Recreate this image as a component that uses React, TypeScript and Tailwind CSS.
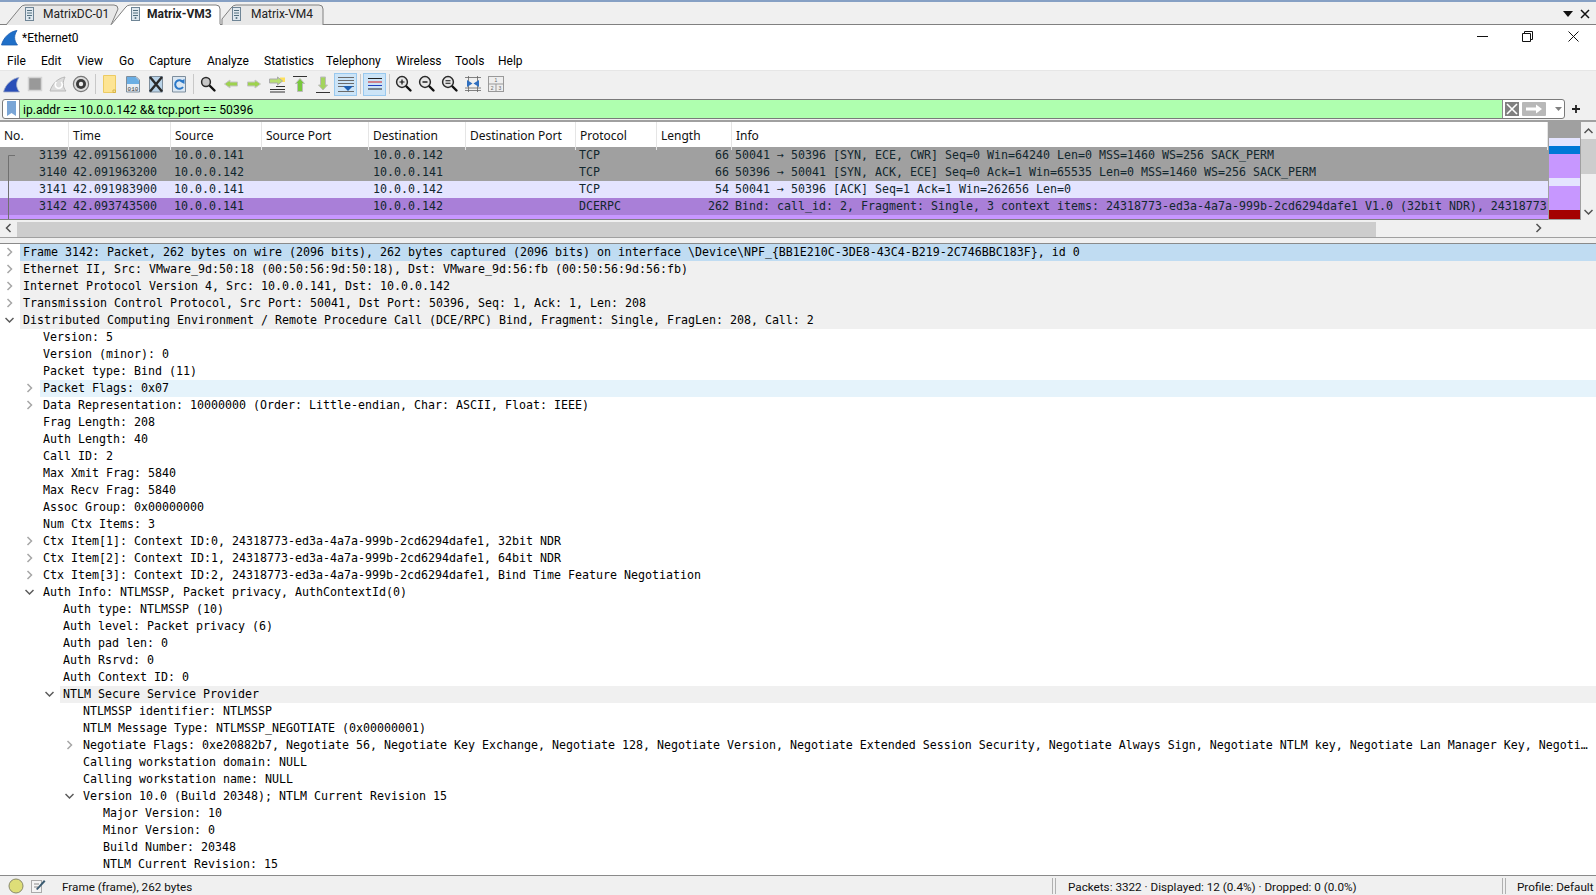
import React from "react"

const MONO = "font-['DejaVu_Sans_Mono','Liberation_Mono',monospace] text-[11.63px]"

const packets = [
    { no: "3139", time: "42.091561000", src: "10.0.0.141", dst: "10.0.0.142", proto: "TCP", len: "66", info: "50041 → 50396 [SYN, ECE, CWR] Seq=0 Win=64240 Len=0 MSS=1460 WS=256 SACK_PERM", bg: "bg-[#a0a0a0]" },
    { no: "3140", time: "42.091963200", src: "10.0.0.142", dst: "10.0.0.141", proto: "TCP", len: "66", info: "50396 → 50041 [SYN, ACK, ECE] Seq=0 Ack=1 Win=65535 Len=0 MSS=1460 WS=256 SACK_PERM", bg: "bg-[#a0a0a0]" },
    { no: "3141", time: "42.091983900", src: "10.0.0.141", dst: "10.0.0.142", proto: "TCP", len: "54", info: "50041 → 50396 [ACK] Seq=1 Ack=1 Win=262656 Len=0", bg: "bg-[#e4e4ff]" },
    { no: "3142", time: "42.093743500", src: "10.0.0.141", dst: "10.0.0.142", proto: "DCERPC", len: "262", info: "Bind: call_id: 2, Fragment: Single, 3 context items: 24318773-ed3a-4a7a-999b-2cd6294dafe1 V1.0 (32bit NDR), 24318773", bg: "bg-[#a97fd8]" },
]

const menus = [
    { label: "File", w: "w-[34px]" },
    { label: "Edit", w: "w-[36px]" },
    { label: "View", w: "w-[42px]" },
    { label: "Go", w: "w-[30px]" },
    { label: "Capture", w: "w-[58px]" },
    { label: "Analyze", w: "w-[57px]" },
    { label: "Statistics", w: "w-[62px]" },
    { label: "Telephony", w: "w-[70px]" },
    { label: "Wireless", w: "w-[59px]" },
    { label: "Tools", w: "w-[43px]" },
    { label: "Help", w: "w-[40px]" },
]

type TreeRow = { text: string; level: number; arrow?: "right" | "down"; bg?: string }

const tree: TreeRow[] = [
    { level: 0, arrow: "right", bg: "bg-[#c0dcf2]", text: "Frame 3142: Packet, 262 bytes on wire (2096 bits), 262 bytes captured (2096 bits) on interface \\Device\\NPF_{BB1E210C-3DE8-43C4-B219-2C746BBC183F}, id 0" },
    { level: 0, arrow: "right", bg: "bg-[#f0f0f0]", text: "Ethernet II, Src: VMware_9d:50:18 (00:50:56:9d:50:18), Dst: VMware_9d:56:fb (00:50:56:9d:56:fb)" },
    { level: 0, arrow: "right", bg: "bg-[#f0f0f0]", text: "Internet Protocol Version 4, Src: 10.0.0.141, Dst: 10.0.0.142" },
    { level: 0, arrow: "right", bg: "bg-[#f0f0f0]", text: "Transmission Control Protocol, Src Port: 50041, Dst Port: 50396, Seq: 1, Ack: 1, Len: 208" },
    { level: 0, arrow: "down", bg: "bg-[#f0f0f0]", text: "Distributed Computing Environment / Remote Procedure Call (DCE/RPC) Bind, Fragment: Single, FragLen: 208, Call: 2" },
    { level: 1, text: "Version: 5" },
    { level: 1, text: "Version (minor): 0" },
    { level: 1, text: "Packet type: Bind (11)" },
    { level: 1, arrow: "right", bg: "bg-[#e5f3fb]", text: "Packet Flags: 0x07" },
    { level: 1, arrow: "right", text: "Data Representation: 10000000 (Order: Little-endian, Char: ASCII, Float: IEEE)" },
    { level: 1, text: "Frag Length: 208" },
    { level: 1, text: "Auth Length: 40" },
    { level: 1, text: "Call ID: 2" },
    { level: 1, text: "Max Xmit Frag: 5840" },
    { level: 1, text: "Max Recv Frag: 5840" },
    { level: 1, text: "Assoc Group: 0x00000000" },
    { level: 1, text: "Num Ctx Items: 3" },
    { level: 1, arrow: "right", text: "Ctx Item[1]: Context ID:0, 24318773-ed3a-4a7a-999b-2cd6294dafe1, 32bit NDR" },
    { level: 1, arrow: "right", text: "Ctx Item[2]: Context ID:1, 24318773-ed3a-4a7a-999b-2cd6294dafe1, 64bit NDR" },
    { level: 1, arrow: "right", text: "Ctx Item[3]: Context ID:2, 24318773-ed3a-4a7a-999b-2cd6294dafe1, Bind Time Feature Negotiation" },
    { level: 1, arrow: "down", text: "Auth Info: NTLMSSP, Packet privacy, AuthContextId(0)" },
    { level: 2, text: "Auth type: NTLMSSP (10)" },
    { level: 2, text: "Auth level: Packet privacy (6)" },
    { level: 2, text: "Auth pad len: 0" },
    { level: 2, text: "Auth Rsrvd: 0" },
    { level: 2, text: "Auth Context ID: 0" },
    { level: 2, arrow: "down", bg: "bg-[#f0f0f0]", text: "NTLM Secure Service Provider" },
    { level: 3, text: "NTLMSSP identifier: NTLMSSP" },
    { level: 3, text: "NTLM Message Type: NTLMSSP_NEGOTIATE (0x00000001)" },
    { level: 3, arrow: "right", text: "Negotiate Flags: 0xe20882b7, Negotiate 56, Negotiate Key Exchange, Negotiate 128, Negotiate Version, Negotiate Extended Session Security, Negotiate Always Sign, Negotiate NTLM key, Negotiate Lan Manager Key, Negoti…" },
    { level: 3, text: "Calling workstation domain: NULL" },
    { level: 3, text: "Calling workstation name: NULL" },
    { level: 3, arrow: "down", text: "Version 10.0 (Build 20348); NTLM Current Revision 15" },
    { level: 4, text: "Major Version: 10" },
    { level: 4, text: "Minor Version: 0" },
    { level: 4, text: "Build Number: 20348" },
    { level: 4, text: "NTLM Current Revision: 15" },
]

const indent = ["ml-[20px]", "ml-[40px]", "ml-[60px]", "ml-[80px]", "ml-[100px]"]
const arrowWidth = ["w-[20px]", "w-[40px]", "w-[60px]", "w-[80px]", "w-[100px]"]

const Chevron = ({ dir, color = "#a6a6a6" }: { dir: "right" | "down" | "left" | "up"; color?: string }) => {
    const d = { right: "M2.5 1 L6.5 5 L2.5 9", left: "M6.5 1 L2.5 5 L6.5 9", down: "M0.5 3 L4.5 7 L8.5 3", up: "M0.5 7 L4.5 3 L8.5 7" }[dir]
    return (
        <svg width="9" height="10" viewBox="0 0 9 10" fill="none">
            <path d={d} stroke={color} strokeWidth="1.5" />
        </svg>
    )
}

const Shark = ({ light }: { light?: boolean }) => (
    <svg width="17" height="17" viewBox="0 0 17 17">
        <path d="M0.5 16 C2.5 8 9 2.5 16 1.5 C13 6 12.5 11 16.5 16 Z" fill={light ? "#1f6fc8" : "#2a4fb8"} stroke={light ? "#1a5db0" : "#a4aec8"} strokeWidth="0.8" />
    </svg>
)

const DocTab = () => (
    <svg width="9" height="14" viewBox="0 0 9 14" className="shrink-0">
        <rect x="0.5" y="0.5" width="8" height="13" fill="#dfe8ef" stroke="#6f8596" />
        <path d="M2 3.5H7M2 6H7M2 8.5H7" stroke="#54707f" />
        <circle cx="4.5" cy="11" r="1" fill="#54707f" />
    </svg>
)

const Icon = ({ children }: { children: React.ReactNode }) => (
    <svg width="20" height="20" viewBox="0 0 20 20">{children}</svg>
)

const Magnifier = ({ mark }: { mark?: "plus" | "minus" | "eq" }) => (
    <Icon>
        <path d="M12 12 L16.5 16.5" stroke="#111" strokeWidth="2.4" strokeLinecap="round" />
        <circle cx="8" cy="8" r={mark ? 5.4 : 4.4} fill={mark ? "#e8e8e8" : "#c8c8c8"} stroke="#2a2a2a" strokeWidth="1.5" />
        {mark === "plus" && <path d="M5.5 8H10.5M8 5.5V10.5" stroke="#111" strokeWidth="1.2" />}
        {mark === "minus" && <path d="M5.5 8H10.5" stroke="#111" strokeWidth="1.4" />}
        {mark === "eq" && <path d="M5.5 6.8H10.5M5.5 9.2H10.5" stroke="#111" strokeWidth="1.1" />}
    </Icon>
)

const ArrowH = ({ left }: { left?: boolean }) => (
    <Icon>
        <path
            d={left ? "M3.5 10 L9 6 V8 H16.5 V12 H9 V14 Z" : "M16.5 10 L11 6 V8 H3.5 V12 H11 V14 Z"}
            fill="#9ed24f"
            stroke="#c4c4c4"
        />
    </Icon>
)

const Sep = () => (
    <div className="w-[6px] h-[20px] flex justify-center shrink-0">
        <div className="w-px h-full bg-[#c8c8c8]" />
    </div>
)

const Btn = ({ children, on }: { children: React.ReactNode; on?: boolean }) => (
    <div className={`w-[23px] h-[23px] flex items-center justify-center shrink-0 ${on ? "bg-[#cce4f7] border border-[#99c9ef]" : ""}`}>
        {children}
    </div>
)

const Toolbar = () => (
    <div className="h-[27px] flex items-center bg-[#f0f0f0] border-t border-[#e6e6e6]">
        <Btn><Shark /></Btn>
        <Btn>
            <Icon><rect x="3.5" y="3.5" width="13" height="13" fill="#999" stroke="#d4d4d4" strokeWidth="1.5" /></Icon>
        </Btn>
        <Btn>
            <Icon>
                <path d="M2 17 C4 10 10 4 17 3 C14.5 8 14.5 13 18 17 Z" fill="#dcdcdc" stroke="#b8b8b8" />
                <path d="M13 8 A3.5 3.5 0 1 1 8.5 8" fill="none" stroke="#fff" strokeWidth="1.6" />
            </Icon>
        </Btn>
        <Btn>
            <Icon>
                <circle cx="10" cy="10" r="7.6" fill="#ddd" stroke="#777" strokeWidth="1.2" />
                <circle cx="10" cy="10" r="5" fill="#3a3a3a" />
                <circle cx="10" cy="10" r="2.2" fill="#eee" />
            </Icon>
        </Btn>
        <Sep />
        <Btn>
            <Icon>
                <path d="M3.5 1.5 H15.5 V18.5 H3.5 Z" fill="#fde493" stroke="#eccb63" />
                <path d="M13 16 H15.5 V18.5 H13 Z" fill="none" stroke="#d8b548" />
            </Icon>
        </Btn>
        <Btn>
            <Icon>
                <path d="M3.5 2.5 H13 L16.5 6 V18 H3.5 Z" fill="#e8eef4" stroke="#7d8d9c" />
                <path d="M4 3 H12.5 L16 6.5 V10 H4 Z" fill="#6aaee4" />
                <text x="10" y="16.5" textAnchor="middle" fontSize="6" fontFamily="Liberation Mono" fill="#333">010</text>
            </Icon>
        </Btn>
        <Btn>
            <Icon>
                <path d="M3.5 2.5 H16.5 V18 H3.5 Z" fill="#b9d3e8" stroke="#7d8d9c" />
                <path d="M4 3 L16 17.5 M16 3 L4 17.5" stroke="#2a2a2a" strokeWidth="2.4" />
            </Icon>
        </Btn>
        <Btn>
            <Icon>
                <path d="M3.5 2.5 H16.5 V18 H3.5 Z" fill="#dbe7f2" stroke="#7d8d9c" />
                <path d="M14 8 A4.3 4.3 0 1 0 14 13" fill="none" stroke="#2a78c8" strokeWidth="2" />
                <path d="M11 7.5 L15.5 5 V10 Z" fill="#2a78c8" />
            </Icon>
        </Btn>
        <Sep />
        <Btn><Magnifier /></Btn>
        <Btn><ArrowH left /></Btn>
        <Btn><ArrowH /></Btn>
        <Btn>
            <Icon>
                <path d="M3 15.5H18M3 18H18M9 12.5H18" stroke="#333" />
                <path d="M13 3.5 H18 V8 H13 Z" fill="#fde05c" />
                <path d="M15.5 7 L10.5 3 V5 H2.5 V9 H10.5 V11 Z" fill="#b8e070" stroke="#aaa" />
            </Icon>
        </Btn>
        <Btn>
            <Icon>
                <path d="M3 2.5H17" stroke="#333" />
                <path d="M10 4.5 L14.5 9.5 H12.5 V17.5 H7.5 V9.5 H5.5 Z" fill="#79c93e" stroke="#bbb" />
            </Icon>
        </Btn>
        <Btn>
            <Icon>
                <path d="M3 18.5H17" stroke="#333" />
                <path d="M10 16 L14.5 11 H12.5 V3 H7.5 V11 H5.5 Z" fill="#a3d45c" stroke="#bbb" />
            </Icon>
        </Btn>
        <Btn on>
            <Icon>
                <path d="M2 3.5H18M2 6.5H18M2 9.5H18M2 12.5H18M2 17.5H18" stroke="#6a6a6a" />
                <path d="M7 12 H17 L12 17 Z" fill="#1f5fb0" />
            </Icon>
        </Btn>
        <Sep />
        <Btn on>
            <Icon>
                <path d="M3 4.5H17" stroke="#222" />
                <path d="M3 8H17" stroke="#d02020" />
                <path d="M3 11.5H17" stroke="#2040c0" />
                <path d="M3 15H17" stroke="#222" />
            </Icon>
        </Btn>
        <Sep />
        <Btn><Magnifier mark="plus" /></Btn>
        <Btn><Magnifier mark="minus" /></Btn>
        <Btn><Magnifier mark="eq" /></Btn>
        <Btn>
            <Icon>
                <path d="M2 3.5H18M2 16.5H18M2 14H18M5.5 2V18M14.5 2V18" stroke="#666" strokeWidth="0.8" />
                <path d="M4 6 L9.5 9.5 L4 13 Z M16 6 L10.5 9.5 L16 13 Z" fill="#2f6fc0" />
            </Icon>
        </Btn>
        <Btn>
            <Icon>
                <rect x="2.5" y="2.5" width="15" height="15" fill="#eee" stroke="#999" />
                <path d="M2.5 10H17.5M10 10V17.5" stroke="#999" />
                <text x="10" y="8" textAnchor="middle" fontSize="5" fontFamily="Liberation Sans" fill="#666">1</text>
                <text x="6.2" y="15.8" textAnchor="middle" fontSize="5" fontFamily="Liberation Sans" fill="#666">2</text>
                <text x="13.8" y="15.8" textAnchor="middle" fontSize="5" fontFamily="Liberation Sans" fill="#666">3</text>
            </Icon>
        </Btn>
    </div>
)

const Tabs = () => (
    <div className="relative h-[25px] bg-[#f0f0f0] border-t-2 border-b border-t-[#86a0c4] border-b-[#808080] flex items-center text-[12px] text-[#222] pt-[2px]">
        <svg width="340" height="23" viewBox="0 0 340 23" className="absolute left-0 top-0">
            <path d="M6 23 L20 6 Q22 3 25 3 L114 3 Q118 3 118 7 L111 23" fill="#e8e8e8" stroke="#808080" />
            <path d="M222 23 V17 L231 6 Q233 3 236 3 L319 3 Q323 3 323 7 V23" fill="#e8e8e8" stroke="#808080" />
            <path d="M111 23 L125 6 Q127 3 130 3 L216 3 Q220 3 220 7 V23" fill="#ffffff" stroke="#808080" />
            <path d="M112 22.5 H219.5 V23 H112 Z" fill="#ffffff" stroke="#ffffff" />
        </svg>
        <div className="relative flex items-center w-[106px] ml-[25px] gap-[9px]"><DocTab /><span>MatrixDC-01</span></div>
        <div className="relative flex items-center w-[101px] gap-[7px] font-bold"><DocTab /><span>Matrix-VM3</span></div>
        <div className="relative flex items-center gap-[10px]"><DocTab /><span>Matrix-VM4</span></div>
        <div className="ml-auto flex items-center gap-[7px] pr-[6px]">
            <svg width="10" height="6" viewBox="0 0 10 6"><path d="M0 0H10L5 6Z" fill="#111" /></svg>
            <svg width="10" height="10" viewBox="0 0 10 10"><path d="M1 1L9 9M9 1L1 9" stroke="#111" strokeWidth="1.5" /></svg>
        </div>
    </div>
)

const Title = () => (
    <div className="h-[27px] bg-white flex items-center pl-px pb-[2px] text-[12px] text-black">
        <Shark light />
        <span className="ml-[4px]">*Ethernet0</span>
        <div className="ml-auto flex items-center pb-[2px]">
            <div className="w-[45px] flex justify-center">
                <svg width="11" height="11" viewBox="0 0 11 11"><path d="M0 5.5H11" stroke="#111" /></svg>
            </div>
            <div className="w-[45px] flex justify-center">
                <svg width="11" height="11" viewBox="0 0 11 11" fill="none"><path d="M0.5 2.5H8.5V10.5H0.5ZM2.5 2.5V0.5H10.5V8.5H8.5" stroke="#111" /></svg>
            </div>
            <div className="w-[46px] flex justify-center">
                <svg width="11" height="11" viewBox="0 0 11 11"><path d="M0.5 0.5L10.5 10.5M10.5 0.5L0.5 10.5" stroke="#111" /></svg>
            </div>
        </div>
    </div>
)

const Menu = () => (
    <div className="h-[18px] bg-white flex items-center pl-[7px] text-[12px] text-black">
        {menus.map((m) => (
            <span key={m.label} className={m.w}>{m.label}</span>
        ))}
    </div>
)

const FilterBar = () => (
    <div className="h-[23px] bg-[#f0f0f0] flex items-center pl-[2px] shrink-0">
        <div className="w-[1563px] h-[20px] flex items-stretch bg-white border border-[#7a7a7a] rounded-[3px] overflow-hidden">
            <div className="w-[17px] flex items-center justify-center border-r border-[#8a8a8a]">
                <svg width="9" height="15" viewBox="0 0 9 15"><path d="M0 0H9V15L4.5 12L0 15Z" fill="#7aa5d6" /></svg>
            </div>
            <div className="flex-1 bg-[#afffaf] pl-[3px] text-[12.1px] leading-[20px] text-black border-r border-[#8a8a8a]">
                ip.addr == 10.0.0.142 &amp;&amp; tcp.port == 50396
            </div>
            <div className="flex items-center pl-[2px] gap-[3px] w-[61px]">
                <svg width="14" height="14" viewBox="0 0 14 14">
                    <rect width="14" height="14" fill="#808080" />
                    <path d="M2 2L12 12M12 2L2 12" stroke="#fff" strokeWidth="1.6" />
                </svg>
                <svg width="24" height="14" viewBox="0 0 24 14">
                    <rect width="24" height="14" rx="1" fill="#b8b8b8" />
                    <path d="M4 5.5H14V2.5L20 7L14 11.5V8.5H4Z" fill="#fff" />
                </svg>
                <svg width="7" height="4" viewBox="0 0 7 4" className="ml-[6px]"><path d="M0 0H7L3.5 4Z" fill="#808080" /></svg>
            </div>
        </div>
        <svg width="10" height="10" viewBox="0 0 10 10" className="ml-[6px]"><path d="M5 1V9M1 5H9" stroke="#222" strokeWidth="1.8" /></svg>
    </div>
)

const COLS = "grid grid-cols-[69px_102px_91px_107px_97px_110px_81px_75px_1fr]"

const PacketList = () => (
    <div className="h-[98px] flex shrink-0">
        <div className="w-[1548px] relative overflow-hidden border-b border-[#808080]">
            <div className={`${COLS} h-[25px] bg-white text-[12px] text-[#111] font-['Noto_Sans',sans-serif]`}>
                {["No.", "Time", "Source", "Source Port", "Destination", "Destination Port", "Protocol", "Length", "Info"].map((h) => (
                    <div key={h} className="pl-[4px] leading-[28px] border-r border-[#e5e5e5]">{h}</div>
                ))}
            </div>
            {packets.map((p) => (
                <div key={p.no} className={`${COLS} h-[17px] leading-[17px] text-[#12272e] whitespace-pre ${p.bg} ${MONO}`}>
                    <div className="text-right pr-[2px]">{p.no}</div>
                    <div className="pl-[4px]">{p.time}</div>
                    <div className="pl-[3px]">{p.src}</div>
                    <div />
                    <div className="pl-[4px]">{p.dst}</div>
                    <div />
                    <div className="pl-[3px]">{p.proto}</div>
                    <div className="text-right pr-[3px]">{p.len}</div>
                    <div className="pl-[3px] overflow-hidden">{p.info}</div>
                </div>
            ))}
            <div className={`h-[5px] bg-[#c797ff] pl-[735px] leading-[18px] text-[#12272e] whitespace-pre overflow-hidden ${MONO}`}>
                Bind_ack: call_id: 2, Fragment: Single
            </div>
            <svg width="10" height="64" viewBox="0 0 10 64" className="absolute left-[7px] top-[33px]">
                <path d="M8 0.5H1.5V64" fill="none" stroke="#707070" />
            </svg>
        </div>
        <div className="w-[33px] flex flex-col bg-[#c797ff] border-l border-r border-[#a0a0a0] border-b border-b-[#a0a0a0]">
            <div className="h-[16px] bg-[#a0a0a0]" />
            <div className="h-[8px] bg-[#e4e4ff]" />
            <div className="h-[8px] bg-[#0078d7]" />
            <div className="h-[24px]" />
            <div className="h-[8px] bg-[#e4e4ff]" />
            <div className="h-[24px]" />
            <div className="h-[9px] bg-[#a40000]" />
        </div>
        <div className="flex-1 bg-[#f0f0f0] flex flex-col items-center">
            <div className="h-[17px] flex items-center"><Chevron dir="up" color="#505050" /></div>
            <div className="w-full h-[35px] bg-[#cdcdcd]" />
            <div className="mt-auto h-[17px] flex items-center"><Chevron dir="down" color="#505050" /></div>
        </div>
    </div>
)

const HScroll = () => (
    <div className="h-[16px] bg-[#f0f0f0] flex shrink-0">
        <div className="w-[1581px] flex items-center">
            <div className="w-[17px] flex justify-center pb-[2px]"><Chevron dir="left" color="#505050" /></div>
            <div className="w-[1359px] h-[15px] bg-[#cdcdcd]" />
            <div className="flex-1 flex justify-end pr-[38px] pb-[2px]"><Chevron dir="right" color="#505050" /></div>
        </div>
    </div>
)

const Tree = () => (
    <div className={`flex-1 bg-white overflow-hidden text-black ${MONO}`}>
        {tree.map((r, i) => (
            <div key={i} className="relative h-[17px] leading-[17px] whitespace-pre">
                {r.arrow && (
                    <div className={`absolute left-0 top-0 h-[16px] flex items-center justify-end ${arrowWidth[r.level]} pr-[6px]`}>
                        <Chevron dir={r.arrow} color={r.arrow === "down" ? "#5a5a5a" : "#a6a6a6"} />
                    </div>
                )}
                <div className={`${indent[r.level]} pl-[3px] ${r.bg || ""}`}>{r.text}</div>
            </div>
        ))}
    </div>
)

const StatusBar = () => (
    <div className="h-[20px] shrink-0 bg-[#f0f0f0] border-t border-[#8a8a8a] flex items-center text-[11.7px] text-[#111]">
        <div className="w-[1052px] flex items-center pl-[8px]">
            <svg width="16" height="16" viewBox="0 0 16 16">
                <circle cx="8" cy="8" r="7" fill="#dede78" stroke="#8a8a6a" />
            </svg>
            <svg width="16" height="16" viewBox="0 0 16 16" className="ml-[6px]">
                <rect x="1.5" y="2.5" width="10" height="12" fill="#f4f4f4" stroke="#aaa" />
                <path d="M4 6H9M4 9H8" stroke="#888" />
                <path d="M6 11 L14 2 L15.5 3.5 L7.5 12 Z" fill="#3a5a70" />
            </svg>
            <span className="ml-[16px] pt-[5px]">Frame (frame), 262 bytes</span>
        </div>
        <div className="w-[4px] h-[16px] border-l border-r border-[#b0b0b0]" />
        <div className="w-[446px] pl-[12px] pt-[5px]">Packets: 3322 · Displayed: 12 (0.4%) · Dropped: 0 (0.0%)</div>
        <div className="w-[4px] h-[16px] border-l border-r border-[#b0b0b0]" />
        <div className="pl-[11px] pt-[5px] whitespace-pre">Profile: Default</div>
    </div>
)

const App = () => {
    return (
        <div className="w-screen h-screen overflow-hidden flex flex-col bg-white font-['Roboto','Noto_Sans',sans-serif]">
            <Tabs />
            <Title />
            <Menu />
            <Toolbar />
            <FilterBar />
            <div className="h-[2px] bg-[#a0a0a0] shrink-0" />
            <PacketList />
            <div className="shrink-0 h-[1px] bg-[#f0f0f0]" />
            <HScroll />
            <div className="h-[7px] shrink-0 bg-[#f0f0f0] border-t border-b border-t-[#a0a0a0] border-b-[#8a8a8a]" />
            <Tree />
            <StatusBar />
        </div>
    )
}

export default App
